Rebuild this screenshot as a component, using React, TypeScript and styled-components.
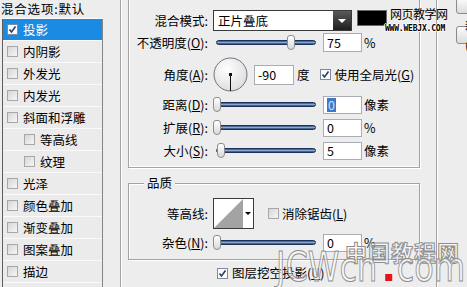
import React from 'react';
import styled, { createGlobalStyle } from 'styled-components';

const GlobalStyle = createGlobalStyle`
  html, body {
    margin: 0;
    padding: 0;
  }
  body {
    background: #ededed;
    font-family: "Noto Sans CJK SC", "Noto Sans", sans-serif;
    font-size: 12px;
    color: #000;
  }
`;

const Dialog = styled.div`
  position: relative;
  width: 467px;
  height: 287px;
  overflow: hidden;
  display: flex;
  align-items: flex-start;
  background: #ededed;
`;

/* ---------- left style list ---------- */

const StyleList = styled.div`
  width: 103px;
  height: 287px;
  flex-shrink: 0;
  display: flex;
  flex-direction: column;
`;

const ListHeader = styled.div`
  height: 18px;
  border-bottom: 1px solid #fafafa;
  display: flex;
  align-items: center;
  padding-left: 1px;
  font-size: 12.5px;
  line-height: 14px;
  letter-spacing: 0.8px;
  white-space: nowrap;
`;

const ListBody = styled.div`
  flex: 1;
  margin-left: 2px;
  border-left: 1px solid #5e5e5e;
  border-right: 1px solid #858585;
  background: #ebebeb;
`;

const ListItem = styled.div<{ $selected?: boolean; $indent?: boolean }>`
  height: 21px;
  border-bottom: 1px solid #fafafa;
  display: flex;
  align-items: center;
  gap: 5px;
  padding-left: ${(p) => (p.$indent ? 21 : 4)}px;
  background: ${(p) => (p.$selected ? '#1a8ae2' : 'transparent')};
  color: ${(p) => (p.$selected ? '#fff' : '#000')};
  font-size: 12.5px;
  line-height: 14px;
  white-space: nowrap;
`;

const Box = styled.span<{ $checked?: boolean }>`
  width: 11px;
  height: 11px;
  box-sizing: border-box;
  flex-shrink: 0;
  border: 1px solid ${(p) => (p.$checked ? '#7d8aa0' : '#a7a7a7')};
  background: ${(p) => (p.$checked ? '#fbfbfb' : 'linear-gradient(135deg, #d6d6d6, #f6f6f6)')};
  display: flex;
  align-items: center;
  justify-content: center;
`;

function Check({ checked }: { checked?: boolean }) {
  return (
    <Box $checked={checked}>
      {checked && (
        <svg width="9" height="9" viewBox="0 0 9 9">
          <path d="M1.5 4.5 L3.5 7 L7.5 1.5" fill="none" stroke="#2c3c68" strokeWidth="1.6" />
        </svg>
      )}
    </Box>
  );
}

/* ---------- group boxes ---------- */

const OuterGroup = styled.div`
  margin-left: 17px;
  width: 308px;
  height: 287px;
  flex-shrink: 0;
  border-left: 1px solid #a2a2a2;
  border-right: 1px solid #a2a2a2;
  box-shadow: inset 1px 0 0 #fff, 1px 0 0 #fff;
  padding-left: 7px;
  display: flex;
  flex-direction: column;
`;

const StructureBox = styled.div`
  width: 292px;
  height: 168px;
  box-sizing: border-box;
  border: 1px solid #a2a2a2;
  border-top: none;
  box-shadow: inset 1px -1px 0 #fff, 1px 1px 0 #fff;
  padding-top: 10px;
  display: flex;
  flex-direction: column;
`;

const QualityBox = styled.div`
  position: relative;
  margin-top: 15px;
  width: 292px;
  height: 77px;
  box-sizing: border-box;
  border: 1px solid #a2a2a2;
  box-shadow: inset 1px 1px 0 #fff, 1px 1px 0 #fff;
  padding-top: 14px;
  display: flex;
  flex-direction: column;
`;

const Legend = styled.span`
  position: absolute;
  left: 15px;
  top: -8px;
  padding: 0 3px;
  background: #ededed;
  font-size: 12.5px;
  line-height: 14px;
`;

const Row = styled.div<{ $h: number; $mt?: number }>`
  height: ${(p) => p.$h}px;
  margin-top: ${(p) => p.$mt ?? 0}px;
  display: flex;
  align-items: center;
  white-space: nowrap;
  line-height: 14px;
`;

const Label = styled.span`
  width: 79px;
  margin-right: 5px;
  flex-shrink: 0;
  text-align: right;
  font-size: 12.5px;
`;

const Unit = styled.span<{ $ml?: number }>`
  margin-left: ${(p) => p.$ml ?? 2}px;
  font-size: 12.5px;
`;

const Text = styled.span<{ $ml?: number }>`
  margin-left: ${(p) => p.$ml ?? 3}px;
  font-size: 12.5px;
`;

/* ---------- controls ---------- */

const Select = styled.div`
  width: 139px;
  height: 21px;
  box-sizing: border-box;
  border: 1px solid #3a3a3a;
  background: #fff;
  display: flex;
  align-items: center;
  font-size: 12.5px;
`;

const SelectText = styled.span`
  flex: 1;
  padding-left: 4px;
`;

const SelectArrow = styled.span`
  width: 18px;
  height: 100%;
  background: linear-gradient(#5a5a5a, #1e1e1e);
  display: flex;
  align-items: center;
  justify-content: center;
  &::after {
    content: '';
    border-left: 4px solid transparent;
    border-right: 4px solid transparent;
    border-top: 4px solid #fff;
  }
`;

const Swatch = styled.span`
  align-self: flex-start;
  margin-left: 5px;
  width: 30px;
  height: 16px;
  box-sizing: border-box;
  border: 1px solid #6a6a6a;
  background: #000;
`;

const SliderWrap = styled.div`
  position: relative;
  width: 103px;
  height: 16px;
  flex-shrink: 0;
`;

const Track = styled.div`
  position: absolute;
  left: 3px;
  right: 0;
  top: 5px;
  height: 5px;
  border-radius: 3px;
  box-sizing: border-box;
  border: 1px solid #1b3159;
  background: linear-gradient(#2f4f80, #88a6cf 50%, #244271);
`;

const Thumb = styled.div`
  position: absolute;
  top: 0;
  width: 8px;
  height: 15px;
  box-sizing: border-box;
  border: 1px solid #8c8c8c;
  border-radius: 3px 3px 4px 4px;
  background: linear-gradient(#ffffff, #d9d9d9);
`;

function Slider({ value, max }: { value: number; max: number }) {
  return (
    <SliderWrap>
      <Track />
      <Thumb style={{ left: Math.round((value / max) * 99) }} />
    </SliderWrap>
  );
}

const Field = styled.div<{ $w?: number; $h: number; $ml?: number }>`
  width: ${(p) => p.$w ?? 39}px;
  height: ${(p) => p.$h}px;
  margin-left: ${(p) => p.$ml ?? 7}px;
  box-sizing: border-box;
  border: 1px solid #a9adb3;
  background: #fff;
  padding-left: 3px;
  display: flex;
  align-items: center;
  font-size: 12.5px;
  flex-shrink: 0;
`;

const Selected = styled.span`
  background: #3c78c8;
  color: #cfe3ff;
  padding: 0 1px;
`;

const DialWrap = styled.span`
  width: 35px;
  height: 35px;
  flex-shrink: 0;
  display: flex;
`;

function Dial() {
  return (
    <DialWrap>
      <svg width="35" height="35" viewBox="0 0 35 35">
        <defs>
          <radialGradient id="dialFill" cx="40%" cy="35%" r="70%">
            <stop offset="0%" stopColor="#ffffff" />
            <stop offset="100%" stopColor="#dcdcdc" />
          </radialGradient>
        </defs>
        <circle cx="17.5" cy="17.5" r="16.5" fill="url(#dialFill)" stroke="#6e7480" strokeWidth="1" />
        <line x1="17.5" y1="17.5" x2="17.5" y2="34" stroke="#111" strokeWidth="1" />
        <rect x="16" y="16" width="3" height="3" fill="#111" />
      </svg>
    </DialWrap>
  );
}

const ContourBox = styled.div`
  width: 41px;
  height: 31px;
  box-sizing: border-box;
  border: 1px solid #3c3c3c;
  background: #fff;
  display: flex;
  flex-shrink: 0;
`;

const ContourArrow = styled.span`
  flex: 1;
  display: flex;
  align-items: center;
  justify-content: center;
  &::after {
    content: '';
    border-left: 3px solid transparent;
    border-right: 3px solid transparent;
    border-top: 3px solid #000;
  }
`;

const KnockRow = styled(Row)`
  padding-left: 89px;
`;

/* ---------- right buttons ---------- */

const ButtonColumn = styled.div`
  margin-left: 19px;
  display: flex;
  flex-direction: column;
  flex-shrink: 0;
`;

const Button = styled.div<{ $mt?: number; $h: number }>`
  width: 70px;
  height: ${(p) => p.$h}px;
  margin-top: ${(p) => p.$mt ?? 0}px;
  box-sizing: border-box;
  border: 1px solid #8a8a8a;
  border-radius: 3px;
  background: linear-gradient(#fbfbfb, #dcdcdc);
  padding-left: 8px;
  display: flex;
  align-items: center;
  font-size: 12.5px;
`;

const PreviewEdge = styled.div`
  margin-top: 6px;
  margin-left: 16px;
  width: 40px;
  height: 90px;
  border-left: 1px solid #a8a8a8;
`;

/* ---------- watermarks lying over the dialog ---------- */

const MarkTop = styled.div`
  position: absolute;
  left: 390px;
  top: 7px;
  font-size: 12px;
  line-height: 14px;
  letter-spacing: -0.5px;
  color: #000;
`;

const MarkUrl = styled.div`
  position: absolute;
  left: 385px;
  top: 24px;
  font-family: "DejaVu Sans Mono", monospace;
  font-size: 8px;
  font-weight: bold;
  line-height: 9px;
  letter-spacing: -0.2px;
  color: #000;
  text-shadow: 1px 0 #fff, -1px 0 #fff, 0 1px #fff, 0 -1px #fff;
`;

const MarkCn = styled.div`
  position: absolute;
  left: 345px;
  top: 238px;
  font-size: 22px;
  line-height: 26px;
  font-weight: bold;
  letter-spacing: 1px;
  color: rgba(255, 255, 255, 0.55);
  -webkit-text-stroke: 1px #8e8e8e;
`;

const MarkEn = styled.div`
  position: absolute;
  left: 276px;
  top: 247px;
  font-family: "DejaVu Sans", sans-serif;
  font-size: 41px;
  line-height: 40px;
  color: rgba(255, 255, 255, 0.55);
  -webkit-text-stroke: 1px #8e8e8e;
  transform: scaleX(0.78);
  transform-origin: left top;
  display: flex;
  align-items: baseline;
  white-space: nowrap;
`;

const RedDot = styled.span`
  width: 9px;
  height: 7px;
  margin: 0 6px 0 10px;
  background: #e3141b;
`;

const styles = [
  { name: '内阴影' },
  { name: '外发光' },
  { name: '内发光' },
  { name: '斜面和浮雕' },
  { name: '等高线', indent: true },
  { name: '纹理', indent: true },
  { name: '光泽' },
  { name: '颜色叠加' },
  { name: '渐变叠加' },
  { name: '图案叠加' },
  { name: '描边' },
];

export default function App() {
  return (
    <>
      <GlobalStyle />
      <Dialog>
        <StyleList>
          <ListHeader>混合选项:默认</ListHeader>
          <ListBody>
            <ListItem $selected>
              <Check checked />
              投影
            </ListItem>
            {styles.map((s) => (
              <ListItem key={s.name} $indent={s.indent}>
                <Check />
                {s.name}
              </ListItem>
            ))}
          </ListBody>
        </StyleList>

        <OuterGroup>
          <StructureBox>
            <Row $h={21}>
              <Label>混合模式:</Label>
              <Select>
                <SelectText>正片叠底</SelectText>
                <SelectArrow />
              </Select>
              <Swatch />
            </Row>
            <Row $h={19} $mt={2}>
              <Label>
                不透明度(<u>O</u>):
              </Label>
              <Slider value={75} max={100} />
              <Field $h={19}>75</Field>
              <Unit>%</Unit>
            </Row>
            <Row $h={35} $mt={5}>
              <Label>
                角度(<u>A</u>):
              </Label>
              <Dial />
              <Field $w={40} $h={20} $ml={6}>
                -90
              </Field>
              <Unit $ml={3}>度</Unit>
              <Text $ml={10}>
                <Check checked />
              </Text>
              <Text $ml={4}>
                使用全局光(<u>G</u>)
              </Text>
            </Row>
            <Row $h={18} $mt={4}>
              <Label>
                距离(<u>D</u>):
              </Label>
              <Slider value={0} max={100} />
              <Field $h={18}>
                <Selected>0</Selected>
              </Field>
              <Unit>像素</Unit>
            </Row>
            <Row $h={18} $mt={5}>
              <Label>
                扩展(<u>R</u>):
              </Label>
              <Slider value={0} max={100} />
              <Field $h={18}>0</Field>
              <Unit>%</Unit>
            </Row>
            <Row $h={18} $mt={5}>
              <Label>
                大小(<u>S</u>):
              </Label>
              <Slider value={5} max={125} />
              <Field $h={18}>5</Field>
              <Unit>像素</Unit>
            </Row>
          </StructureBox>

          <QualityBox>
            <Legend>品质</Legend>
            <Row $h={31}>
              <Label>等高线:</Label>
              <ContourBox>
                <svg width="29" height="29" viewBox="0 0 29 29">
                  <polygon points="0,29 29,0 29,29" fill="#a3a3a3" />
                </svg>
                <ContourArrow />
              </ContourBox>
              <Text $ml={14}>
                <Check />
              </Text>
              <Text $ml={3}>
                消除锯齿(<u>L</u>)
              </Text>
            </Row>
            <Row $h={18} $mt={5}>
              <Label>
                杂色(<u>N</u>):
              </Label>
              <Slider value={0} max={100} />
              <Field $h={18}>0</Field>
              <Unit>%</Unit>
            </Row>
          </QualityBox>

          <KnockRow $h={14} $mt={6}>
            <Check checked />
            <Text $ml={4}>
              图层挖空投影(<u>U</u>)
            </Text>
          </KnockRow>
        </OuterGroup>

        <ButtonColumn>
          <Button $h={16} $mt={-2} />
          <Button $h={18} $mt={12}>
            新建样式(W)...
          </Button>
          <PreviewEdge />
        </ButtonColumn>

        <MarkTop>网页教学网</MarkTop>
        <MarkUrl>WWW.WEBJX.COM</MarkUrl>
        <MarkCn>中国教程网</MarkCn>
        <MarkEn>
          JCWcn
          <RedDot />
          com
        </MarkEn>
      </Dialog>
    </>
  );
}
